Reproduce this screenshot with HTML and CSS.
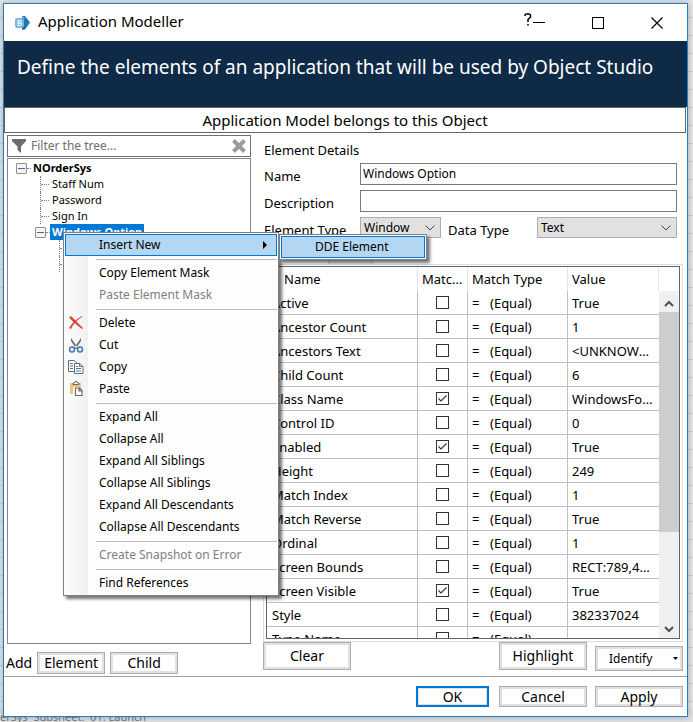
FILE: index.html
```html
<!DOCTYPE html>
<html lang="en">
<head>
    <meta charset="UTF-8">
    <meta name="viewport" content="width=device-width, initial-scale=1.0">
    <title>Application Modeller</title>
    <link rel="stylesheet" href="styles.css">
</head>
<body>
    <div class="backdrop-text">erSys&nbsp; Subsheet:&nbsp; 01. Launch</div>

    <div class="window">
        <header class="titlebar">
            <svg class="app-icon" width="18" height="16" viewBox="0 0 18 16">
                <path d="M8 1h3l5 6.500-5 7H8z" fill="#1878b8"/>
                <path d="M8 0.500l4 3H8z" fill="#5aa5d3"/>
                <path d="M8 12h4l-4 3z" fill="#0b5a96"/>
                <rect x="1" y="3" width="9" height="10" rx="2" fill="#79b7dc"/>
                <path d="M4 5.500h2a1.200 1.200 0 0 1 0 2.500H4zM4 8h2.500a1.200 1.200 0 0 1 0 2.500H4z" fill="none" stroke="#fff"/>
            </svg>
            <h1>Application Modeller</h1>
            <div class="window-buttons">
                <button class="help" aria-label="Help">
                    <svg width="8" height="13" viewBox="0 0 8 13"><path d="M1 3V2l1-1h3l1.500 1v2L4 6.500V9M4 11v1.500" fill="none" stroke="#000" stroke-width="1.500"/></svg>
                </button>
                <button aria-label="Minimize">
                    <svg width="12" height="12" viewBox="0 0 12 12"><path d="M0 5.500h12" stroke="#000"/></svg>
                </button>
                <button aria-label="Maximize">
                    <svg width="12" height="12" viewBox="0 0 12 12"><rect x="0.500" y="0.500" width="11" height="11" fill="none" stroke="#000"/></svg>
                </button>
                <button aria-label="Close">
                    <svg width="12" height="12" viewBox="0 0 12 12"><path d="M0.500 0.500l11 11M11.500 0.500l-11 11" stroke="#000" stroke-width="1.200"/></svg>
                </button>
            </div>
        </header>

        <div class="banner">Define the elements of an application that will be used by Object Studio</div>
        <div class="owner">Application Model belongs to this Object</div>

        <main class="content">
            <section class="tree-pane">
                <div class="filter">
                    <svg width="14" height="14" viewBox="0 0 14 14"><path d="M0 0h14v2L9 7.500V14L5.500 11V7.500L0 2z" fill="#6d6d6d"/></svg>
                    <input type="text" placeholder="Filter the tree..." aria-label="Filter the tree">
                    <button class="clear-filter" aria-label="Clear filter">
                        <svg width="14" height="14" viewBox="0 0 14 14"><path d="M1.500 1.500l11 11M12.500 1.500l-11 11" stroke="#9c9c9c" stroke-width="4"/></svg>
                    </button>
                </div>
                <div class="tree">
                    <ul>
                        <li class="root">
                            <div class="node"><button class="toggle" aria-label="Collapse"></button><b>NOrderSys</b></div>
                            <ul class="branch">
                                <li class="leaf">Staff Num</li>
                                <li class="leaf">Password</li>
                                <li class="leaf">Sign In</li>
                                <li>
                                    <div class="node"><button class="toggle" aria-label="Collapse"></button><b class="selected">Windows Option</b></div>
                                    <ul class="branch inner">
                                        <li class="leaf"></li>
                                        <li class="leaf"></li>
                                    </ul>
                                </li>
                            </ul>
                        </li>
                    </ul>
                </div>
                <div class="add-row">
                    <span>Add</span>
                    <button class="btn">Element</button>
                    <button class="btn">Child</button>
                </div>
            </section>

            <section class="details">
                <h2>Element Details</h2>
                <div class="form">
                    <label for="name">Name</label>
                    <input type="text" id="name" value="Windows Option">
                    <label for="description">Description</label>
                    <input type="text" id="description">
                    <label for="elementType">Element Type</label>
                    <div class="types">
                        <select id="elementType"><option>Window</option></select>
                        <label for="dataType">Data Type</label>
                        <select id="dataType" class="data-type"><option>Text</option></select>
                    </div>
                </div>

                <div class="tabs"><span class="tab"></span></div>
                <div class="tab-page">
                    <div class="grid">
                        <table>
                            <colgroup>
                                <col class="col-name">
                                <col class="col-match">
                                <col class="col-type">
                                <col class="col-value">
                            </colgroup>
                            <thead>
                                <tr><th class="sorted">Name</th><th>Match?</th><th>Match Type</th><th>Value</th></tr>
                            </thead>
                            <tbody id="attributes"></tbody>
                        </table>
                        <div class="scrollbar">
                            <button aria-label="Scroll up">
                                <svg width="10" height="7" viewBox="0 0 10 7"><path d="M1 6l4-4 4 4" fill="none" stroke="#505050" stroke-width="2"/></svg>
                            </button>
                            <div class="thumb"></div>
                            <button aria-label="Scroll down">
                                <svg width="10" height="7" viewBox="0 0 10 7"><path d="M1 1l4 4 4-4" fill="none" stroke="#505050" stroke-width="2"/></svg>
                            </button>
                        </div>
                    </div>
                </div>

                <div class="actions">
                    <button class="btn tall clear">Clear</button>
                    <button class="btn tall">Highlight</button>
                    <button class="btn identify">Identify
                        <svg width="5" height="3" viewBox="0 0 5 3"><path d="M0 0h5L2.500 3z" fill="#000"/></svg>
                    </button>
                </div>
            </section>
        </main>

        <footer>
            <button class="btn primary">OK</button>
            <button class="btn">Cancel</button>
            <button class="btn">Apply</button>
        </footer>

        <div class="menu" role="menu">
            <button class="open" role="menuitem">Insert New
                <svg class="arrow" width="4" height="8" viewBox="0 0 4 8"><path d="M0 0l4 4-4 4z" fill="#000"/></svg>
            </button>
            <hr>
            <button role="menuitem">Copy Element Mask</button>
            <button role="menuitem" disabled>Paste Element Mask</button>
            <hr>
            <button role="menuitem">
                <svg class="icon" width="16" height="16" viewBox="0 0 16 16"><path d="M1 2.500L3 1c3 3 7 7 12 12l-1 1C9 10 5 7 1 2.500z" fill="#d6492c"/><path d="M14.500 1.500C9 5 5 9 3 14L1 13C4 8 8 4 14 1z" fill="#d6492c"/></svg>
                Delete
            </button>
            <button role="menuitem">
                <svg class="icon" width="16" height="16" viewBox="0 0 16 16"><path d="M3 1l7 10-1.500 1L3 4zM13 1L6 11l1.500 1L13 4z" fill="#6b6b6b"/><circle cx="4" cy="12.500" r="2.500" fill="none" stroke="#4677b0" stroke-width="1.500"/><circle cx="12" cy="12.500" r="2.500" fill="none" stroke="#4677b0" stroke-width="1.500"/></svg>
                Cut
            </button>
            <button role="menuitem">
                <svg class="icon" width="16" height="16" viewBox="0 0 16 16"><path d="M6 12.500H0.500v-11H6l3 2.500" fill="#fff" stroke="#6b6b6b"/><path d="M6.500 4.500h5l3.500 3v7H6.500zM11.500 4.500v3H15" fill="#fff" stroke="#6b6b6b"/><path d="M2 4.500h3M2 7h3M2 9.500h3M8 7.500h2M8 9.500h5M8 12h5" stroke="#4677b0"/></svg>
                Copy
            </button>
            <button role="menuitem">
                <svg class="icon" width="16" height="16" viewBox="0 0 16 16"><path d="M2 2h3v2h6V2h2v5h-2V6H5v7H2z" fill="#ecc57a"/><path d="M5 3.500V2h1.500l.5-1.500h2L9.500 2H11v1.500z" fill="#fff" stroke="#6b6b6b"/><path d="M7.500 7h4L14 9.500v5H7.500zM11 7v3h3" fill="#fff" stroke="#6b6b6b" stroke-width="1.200"/></svg>
                Paste
            </button>
            <hr>
            <button role="menuitem">Expand All</button>
            <button role="menuitem">Collapse All</button>
            <button role="menuitem">Expand All Siblings</button>
            <button role="menuitem">Collapse All Siblings</button>
            <button role="menuitem">Expand All Descendants</button>
            <button role="menuitem">Collapse All Descendants</button>
            <hr>
            <button role="menuitem" disabled>Create Snapshot on Error</button>
            <hr>
            <button role="menuitem">Find References</button>
        </div>
        <div class="menu submenu" role="menu">
            <button class="open" role="menuitem">DDE Element</button>
        </div>
    </div>

    <script src="script.js"></script>
</body>
</html>
```

FILE: styles.css
```css
* {
    box-sizing: border-box;
}
body {
    margin: 0;
    height: 100vh;
    padding: 3px 5px 5px 3px;
    overflow: hidden;
    background: repeating-linear-gradient(#e6e6e6 0 17px, #cfcfcf 17px 18px);
    font-family: "Noto Sans", "Open Sans", sans-serif;
    font-size: 14px;
    color: #000;
}
button, input, select {
    font-family: inherit;
    color: inherit;
}
ul {
    list-style: none;
    margin: 0;
    padding: 0;
}
.backdrop-text {
    position: absolute;
    left: 0;
    right: 0;
    bottom: 0;
    height: 14px;
    overflow: hidden;
    background: #e0e0e0;
    font-size: 11px;
    line-height: 18px;
    color: #777;
}
.window {
    position: relative;
    display: flex;
    flex-direction: column;
    height: 100%;
    background: #fff;
    border: 1px solid #1a80d0;
    box-shadow: 0 0 6px rgba(0, 0, 0, 0.3);
}

/* title bar */
.titlebar {
    display: flex;
    align-items: center;
    flex: 0 0 37px;
    padding-left: 10px;
}
.titlebar h1 {
    flex: 1;
    margin: 0 0 0 6px;
    font-size: 15px;
    line-height: 20px;
    padding-bottom: 3px;
    font-weight: normal;
}
.window-buttons {
    display: flex;
    padding-right: 24px;
    gap: 47px;
}
.window-buttons button {
    display: flex;
    padding: 0;
    border: none;
    background: none;
}
.window-buttons .help {
    margin-right: -46px;
    margin-top: -4px;
}
.banner {
    flex: 0 0 66px;
    padding: 12px 13px;
    background: #0e2a47;
    color: #fff;
    font-size: 19px;
    line-height: 28px;
    white-space: nowrap;
}
.owner {
    flex: 0 0 25px;
    border: 1px solid #646464;
    margin-right: 1px;
    font-size: 15px;
    line-height: 24px;
    text-align: center;
}

/* tree */
.content {
    flex: 1;
    display: flex;
    gap: 12px;
    min-height: 0;
    padding: 2px 4px 0 3px;
    border-bottom: 1px solid #a0a0a0;
}
.tree-pane {
    display: flex;
    flex-direction: column;
    flex: 0 0 244px;
}
.filter {
    display: flex;
    align-items: center;
    height: 22px;
    padding: 0 4px;
    border: 1px solid #6e7078;
}
.filter input {
    flex: 1;
    min-width: 0;
    border: none;
    outline: none;
    padding: 0 5px;
    font-size: 12px;
    line-height: 16px;
}
.filter input::placeholder {
    color: #6d6d6d;
}
.clear-filter {
    display: flex;
    padding: 0;
    border: none;
    background: none;
}
.tree {
    flex: 1;
    margin-top: 1px;
    padding: 1px 8px;
    border: 1px solid #82858f;
    font-size: 11px;
    line-height: 16px;
}
.node {
    display: flex;
    align-items: center;
    height: 16px;
}
.toggle {
    width: 11px;
    height: 11px;
    padding: 0;
    border: 1px solid #919191;
    border-radius: 1px;
    background: linear-gradient(#4a63a8, #4a63a8) center / 7px 1px no-repeat, #f4f4f4;
}
.node::after {
    content: "";
    order: 1;
    width: 4px;
    border-top: 1px dotted #808080;
}
.node b {
    order: 2;
    padding: 0 2px;
}
.node .selected {
    background: #0078d7;
    color: #fff;
}
.branch {
    margin-left: 19px;
}
.leaf {
    display: flex;
    align-items: center;
    height: 16px;
    margin-left: 5px;
    border-left: 1px dotted #808080;
}
.leaf::before {
    content: "";
    width: 8px;
    margin-right: 3px;
    border-top: 1px dotted #808080;
}
.add-row {
    display: flex;
    align-items: center;
    gap: 5px;
    height: 27px;
    margin-top: 5px;
    margin-left: -1px;
}
.add-row .btn {
    width: 68px;
    height: 22px;
}
.add-row .btn + .btn {
    margin-left: 0;
}

/* buttons */
.btn {
    padding: 0;
    border: 1px solid #adadad;
    box-shadow: inset 0 0 0 2px #e1e1e1;
    background: #fff;
    font-size: 14px;
    line-height: 16px;
}
.btn.primary {
    border: 2px solid #0078d7;
    box-shadow: inset 0 0 0 1px #e1e1e1;
}

/* element details */
.details {
    flex: 1;
    display: flex;
    flex-direction: column;
    min-width: 0;
}
.details h2 {
    margin: 5px 0 3px 1px;
    font-size: 13px;
    line-height: 20px;
    font-weight: normal;
}
.form {
    display: grid;
    grid-template-columns: 96px 1fr;
    row-gap: 5px;
    margin: 0 6px 0 1px;
}
.form label {
    font-size: 13px;
    line-height: 26px;
    height: 22px;
}
.form input {
    height: 22px;
    min-width: 0;
    padding: 0 2px 2px;
    border: 1px solid #7a7a7a;
    font-size: 12px;
}
.types {
    display: flex;
}
.types label {
    flex: 0 0 96px;
    padding-left: 7px;
}
.form select {
    appearance: none;
    width: 81px;
    height: 21px;
    padding: 0 3px;
    border: 1px solid #adadad;
    border-radius: 0;
    background: #e1e1e1 url("data:image/svg+xml,%3Csvg xmlns='http://www.w3.org/2000/svg' width='10' height='6'%3E%3Cpath d='M0.500 0.500l4.500 4.500 4.500-4.500' fill='none' stroke='%23444'/%3E%3C/svg%3E") right 5px center no-repeat;
    font-size: 12px;
}
.form .data-type {
    flex: 1;
}
.tabs {
    height: 25px;
    padding: 19px 0 0 65px;
}
.tab {
    display: block;
    width: 45px;
    height: 6px;
    background: #f0f0f0;
    border: 1px solid #d9d9d9;
    border-bottom: none;
}
.tab-page {
    flex: 1;
    min-height: 0;
    padding: 1px 2px 2px;
    border: 1px solid #dcdcdc;
}
.grid {
    display: flex;
    height: 100%;
    overflow: hidden;
    border: 1px solid #646464;
}
table {
    flex: 1;
    align-self: flex-start;
    width: 0;
    table-layout: fixed;
    border-collapse: separate;
    border-spacing: 0;
}
.col-name {
    width: 151px;
}
.col-match {
    width: 50px;
}
.col-type {
    width: 100px;
}
th, td {
    height: 24px;
    padding: 0 4px;
    overflow: hidden;
    text-overflow: ellipsis;
    white-space: nowrap;
    text-align: left;
    font-size: 13px;
    font-weight: normal;
    line-height: 20px;
    border-right: 1px solid #c0c0c0;
    border-bottom: 1px solid #c0c0c0;
}
th {
    border-right-color: #e5e5e5;
    border-bottom: none;
}
td:first-child {
    padding-left: 5px;
}
td:last-child {
    border-right: none;
}
.sorted {
    padding-left: 17px;
}
.equals {
    display: inline-block;
    width: 18px;
}
.check {
    text-align: center;
}
input[type="checkbox"] {
    appearance: none;
    display: block;
    width: 13px;
    height: 13px;
    margin: 0 auto;
    border: 1px solid #333;
}
input[type="checkbox"]:checked {
    background: url("data:image/svg+xml,%3Csvg xmlns='http://www.w3.org/2000/svg' width='11' height='11'%3E%3Cpath d='M1.500 5.500L4 8l5.500-5.500' fill='none' stroke='%23333' stroke-width='1.200'/%3E%3C/svg%3E") center no-repeat;
}
.scrollbar {
    display: flex;
    flex-direction: column;
    flex: 0 0 20px;
    margin-top: 24px;
    background: #f0f0f0;
}
.scrollbar button {
    flex: 0 0 21px;
    padding: 0;
    border: none;
    background: none;
}
.thumb {
    flex: 0 0 220px;
    margin-bottom: auto;
    background: #cdcdcd;
}
.actions {
    display: flex;
    align-items: flex-start;
    gap: 8px;
    height: 34px;
}
.actions .btn {
    width: 88px;
}
.actions .tall {
    height: 28px;
}
.actions .clear {
    margin-right: auto;
}
.actions .identify {
    display: flex;
    align-items: center;
    justify-content: space-between;
    height: 25px;
    margin-top: 4px;
    padding: 0 4px 0 13px;
    font-size: 12px;
}
footer {
    display: flex;
    justify-content: flex-end;
    gap: 8px;
    flex: 0 0 39px;
    padding: 9px 4px 0 0;
}
footer .btn {
    width: 88px;
    height: 21px;
}
footer .primary {
    width: 73px;
    margin-right: 2px;
}

/* context menu */
.menu {
    position: absolute;
    left: 59px;
    top: 228px;
    width: 216px;
    padding: 1px;
    border: 1px solid #808080;
    background: linear-gradient(90deg, #fcfcfc, #f1f1f1 24px, #fdfdfd 24px);
    box-shadow: 3px 3px 3px rgba(0, 0, 0, 0.55);
}
.menu button {
    display: flex;
    align-items: center;
    position: relative;
    width: 100%;
    height: 22px;
    padding: 0 0 0 34px;
    border: none;
    background: none;
    font-size: 12px;
    line-height: 16px;
}
.menu button:disabled {
    color: #808080;
}
.menu .open {
    border: 1px solid #0078d7;
    background: #b3d7f3;
    padding-left: 33px;
}
.menu hr {
    height: 1px;
    margin: 3px 0 2px 31px;
    border: none;
    background: #bdbdbd;
}
.icon {
    position: absolute;
    left: 3px;
}
.arrow {
    margin-left: auto;
    margin-right: 9px;
}
.submenu {
    left: 275px;
    top: 230px;
    width: 148px;
    background: #fdfdfd;
}
```

FILE: script.js
```js
const attributes = [
    ['Active', false, 'True'],
    ['Ancestor Count', false, '1'],
    ['Ancestors Text', false, '<UNKNOWN>'],
    ['Child Count', false, '6'],
    ['Class Name', true, 'WindowsForms10'],
    ['Control ID', false, '0'],
    ['Enabled', true, 'True'],
    ['Height', false, '249'],
    ['Match Index', false, '1'],
    ['Match Reverse', false, 'True'],
    ['Ordinal', false, '1'],
    ['Screen Bounds', false, 'RECT:789,412,640,249'],
    ['Screen Visible', true, 'True'],
    ['Style', false, '382337024'],
    ['Type Name', false, '']
];

const tbody = document.getElementById('attributes');

attributes.forEach(([name, match, value]) => {
    const row = tbody.insertRow();
    row.insertCell().textContent = name;

    const box = document.createElement('input');
    box.type = 'checkbox';
    box.checked = match;
    box.setAttribute('aria-label', 'Match ' + name);
    const cell = row.insertCell();
    cell.className = 'check';
    cell.appendChild(box);

    row.insertCell().innerHTML = '<span class="equals">=</span>(Equal)';
    row.insertCell().textContent = value;
});
```
